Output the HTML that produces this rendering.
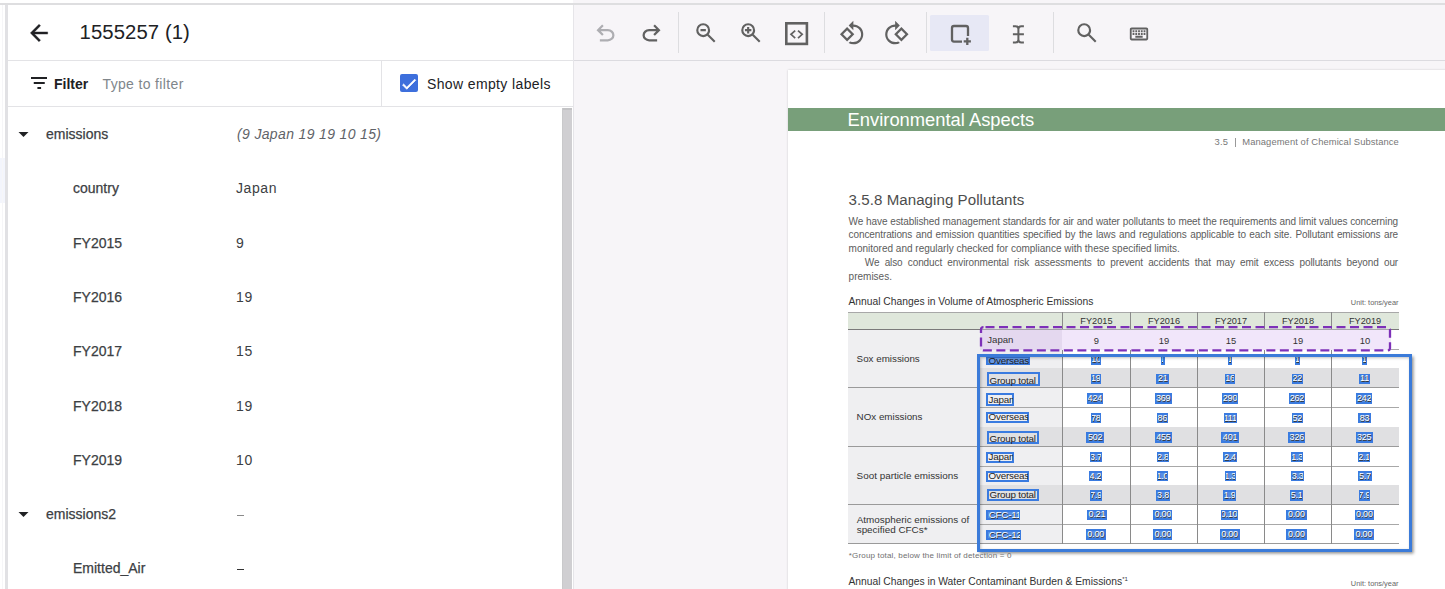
<!DOCTYPE html>
<html><head><meta charset="utf-8"><style>
html,body{margin:0;padding:0;width:1445px;height:589px;overflow:hidden;background:#fff;font-family:"Liberation Sans", sans-serif}
.r{position:absolute;display:block}
.t{position:absolute;white-space:nowrap;line-height:1;font-family:"Liberation Sans", sans-serif}
</style></head><body>
<div class="r" style="left:0.00px;top:0.00px;width:1445.00px;height:589.00px;background:#ffffff"></div>
<div class="r" style="left:573.00px;top:0.00px;width:872.00px;height:589.00px;background:#f7f5f8"></div>
<div class="r" style="left:0.00px;top:3.00px;width:1445.00px;height:2.00px;background:#dedee0"></div>
<div class="r" style="left:0.00px;top:158.00px;width:5.00px;height:45.00px;background:#f3f5fc"></div>
<div class="r" style="left:5.00px;top:5.00px;width:2.50px;height:584.00px;background:#e1e1e4"></div>
<div class="r" style="left:2.00px;top:5.00px;width:1.00px;height:584.00px;background:#f6f6f8"></div>
<div class="r" style="left:7.50px;top:60.00px;width:566.00px;height:1.00px;background:#e3e3e6"></div>
<div class="r" style="left:573.00px;top:60.00px;width:872.00px;height:1.20px;background:#dcdbe0"></div>
<div class="r" style="left:7.50px;top:106.00px;width:566.00px;height:1.00px;background:#e3e3e6"></div>
<div class="r" style="left:381.00px;top:61.00px;width:1.00px;height:45.00px;background:#e3e3e6"></div>
<div class="r" style="left:573.00px;top:5.00px;width:1.20px;height:584.00px;background:#e6e5e9"></div>
<div class="r" style="left:562.00px;top:108.00px;width:10.00px;height:481.00px;background:#d0cfd2"></div>
<div class="r" style="left:562.00px;top:108.00px;width:10.00px;height:1.60px;background:#c3c3c5"></div>
<div class="r" style="left:562.00px;top:108.00px;width:1.00px;height:481.00px;background:#c9c9cb"></div>
<svg class="r" style="left:26.3px;top:20px" width="26" height="26" viewBox="0 0 24 24"><path fill="#202124" stroke="#202124" stroke-width="0.35" d="M20 11H7.83l5.59-5.59L12 4l-8 8 8 8 1.41-1.41L7.83 13H20v-2z"/></svg>
<div class="t" style="left:79.50px;top:21.83px;font-size:20.3px;color:#202124;font-weight:400;font-style:normal;letter-spacing:0.1px">1555257 (1)</div>
<svg class="r" style="left:30.5px;top:72px" width="16.5" height="22" viewBox="3 1 18 22" preserveAspectRatio="none"><path fill="#202124" d="M10 18h4v-2h-4v2zM3 6v2h18V6H3zm3 7h12v-2H6v2z"/></svg>
<div class="t" style="left:54.00px;top:76.56px;font-size:14px;color:#202124;font-weight:700;font-style:normal;">Filter</div>
<div class="t" style="left:102.50px;top:76.56px;font-size:14px;color:#80868b;font-weight:400;font-style:normal;letter-spacing:0.35px">Type to filter</div>
<div class="r" style="left:400.00px;top:74.00px;width:18.00px;height:18.00px;background:#3d6fdc;border-radius:2px"></div>
<svg class="r" style="left:400px;top:74.6px" width="18" height="18" viewBox="0 0 24 24"><path fill="#fff" stroke="#fff" stroke-width="0.9" d="M9 16.17L4.83 12l-1.42 1.41L9 19 21 7l-1.41-1.41z"/></svg>
<div class="t" style="left:427.00px;top:76.56px;font-size:14px;color:#202124;font-weight:400;font-style:normal;letter-spacing:0.37px">Show empty labels</div>
<svg class="r" style="left:14px;top:122.0px" width="19" height="24" viewBox="2.5 0 19 24"><path fill="#202124" d="M7 10l5 5 5-5z"/></svg>
<div class="t" style="left:46.00px;top:126.96px;font-size:14px;color:#3c4043;font-weight:400;font-style:normal;-webkit-text-stroke:0.25px #3c4043">emissions</div>
<div class="t" style="left:237.00px;top:126.96px;font-size:14px;color:#5f6368;font-weight:400;font-style:italic;letter-spacing:0.35px">(9 Japan 19 19 10 15)</div>
<div class="t" style="left:73.00px;top:181.46px;font-size:14px;color:#3c4043;font-weight:400;font-style:normal;-webkit-text-stroke:0.25px #3c4043">country</div>
<div class="t" style="left:236.00px;top:181.46px;font-size:14px;color:#3c4043;font-weight:400;font-style:normal;letter-spacing:0.6px">Japan</div>
<div class="t" style="left:73.00px;top:235.76px;font-size:14px;color:#3c4043;font-weight:400;font-style:normal;-webkit-text-stroke:0.25px #3c4043">FY2015</div>
<div class="t" style="left:236.00px;top:235.76px;font-size:14px;color:#3c4043;font-weight:400;font-style:normal;letter-spacing:0.6px">9</div>
<div class="t" style="left:73.00px;top:289.96px;font-size:14px;color:#3c4043;font-weight:400;font-style:normal;-webkit-text-stroke:0.25px #3c4043">FY2016</div>
<div class="t" style="left:236.00px;top:289.96px;font-size:14px;color:#3c4043;font-weight:400;font-style:normal;letter-spacing:0.6px">19</div>
<div class="t" style="left:73.00px;top:344.26px;font-size:14px;color:#3c4043;font-weight:400;font-style:normal;-webkit-text-stroke:0.25px #3c4043">FY2017</div>
<div class="t" style="left:236.00px;top:344.26px;font-size:14px;color:#3c4043;font-weight:400;font-style:normal;letter-spacing:0.6px">15</div>
<div class="t" style="left:73.00px;top:398.56px;font-size:14px;color:#3c4043;font-weight:400;font-style:normal;-webkit-text-stroke:0.25px #3c4043">FY2018</div>
<div class="t" style="left:236.00px;top:398.56px;font-size:14px;color:#3c4043;font-weight:400;font-style:normal;letter-spacing:0.6px">19</div>
<div class="t" style="left:73.00px;top:452.86px;font-size:14px;color:#3c4043;font-weight:400;font-style:normal;-webkit-text-stroke:0.25px #3c4043">FY2019</div>
<div class="t" style="left:236.00px;top:452.86px;font-size:14px;color:#3c4043;font-weight:400;font-style:normal;letter-spacing:0.6px">10</div>
<svg class="r" style="left:14px;top:502.2px" width="19" height="24" viewBox="2.5 0 19 24"><path fill="#202124" d="M7 10l5 5 5-5z"/></svg>
<div class="t" style="left:46.00px;top:507.16px;font-size:14px;color:#3c4043;font-weight:400;font-style:normal;-webkit-text-stroke:0.25px #3c4043">emissions2</div>
<div class="r" style="left:236.60px;top:514.50px;width:7.30px;height:1.10px;background:#8a8a8a"></div>
<div class="t" style="left:73.00px;top:561.46px;font-size:14px;color:#3c4043;font-weight:400;font-style:normal;-webkit-text-stroke:0.25px #3c4043">Emitted_Air</div>
<div class="r" style="left:236.60px;top:569.40px;width:7.30px;height:1.10px;background:#333"></div>
<svg class="r" style="left:591.80px;top:19.90px" width="27" height="27" viewBox="0 -960 960 960"><path fill="#aeaeb2" d="M280-200v-80h284q63 0 109.5-40T720-420q0-60-46.5-100T564-560H312l104 104-56 56-200-200 200-200 56 56-104 104h252q97 0 166.5 63T800-420q0 94-69.5 157T564-200H280Z"/></svg>
<svg class="r" style="left:637.50px;top:19.80px" width="27" height="27" viewBox="0 -960 960 960"><path fill="#616161" d="M396-200q-97 0-166.5-63T160-420q0-94 69.5-157T396-640h252L544-744l56-56 200 200-200 200-56-56 104-104H396q-63 0-109.5 40T240-420q0 60 46.5 100T396-280h284v80H396Z"/></svg>
<div class="r" style="left:678.00px;top:12.00px;width:1.00px;height:41.00px;background:#dddde0"></div>
<svg class="r" style="left:693.15px;top:20.45px" width="25.7" height="25.7" viewBox="0 -960 960 960"><path fill="#616161" d="M784-120 532-372q-30 24-69 38t-83 14q-109 0-184.5-75.5T120-580q0-109 75.5-184.5T380-840q109 0 184.5 75.5T640-580q0 44-14 83t-38 69l252 252-56 56ZM380-400q75 0 127.5-52.5T560-580q0-75-52.5-127.5T380-760q-75 0-127.5 52.5T200-580q0 75 52.5 127.5T380-400ZM280-540v-80h200v80H280Z"/></svg>
<svg class="r" style="left:738.15px;top:20.45px" width="25.7" height="25.7" viewBox="0 -960 960 960"><path fill="#616161" d="M784-120 532-372q-30 24-69 38t-83 14q-109 0-184.5-75.5T120-580q0-109 75.5-184.5T380-840q109 0 184.5 75.5T640-580q0 44-14 83t-38 69l252 252-56 56ZM380-400q75 0 127.5-52.5T560-580q0-75-52.5-127.5T380-760q-75 0-127.5 52.5T200-580q0 75 52.5 127.5T380-400Zm-40-60v-80h-80v-80h80v-80h80v80h80v80h-80v80h-80Z"/></svg>
<svg class="r" style="left:784px;top:21px" width="25" height="25" viewBox="0 0 25 25"><rect x="2.3" y="2.3" width="20.6" height="20.6" fill="none" stroke="#616161" stroke-width="2.6"/><path d="M11.2 9.6l-4.2 3.75 4.2 3.75M14 9.6l4.2 3.75-4.2 3.75" fill="none" stroke="#616161" stroke-width="1.7"/></svg>
<div class="r" style="left:824.00px;top:12.00px;width:1.00px;height:41.00px;background:#dddde0"></div>
<svg class="r" style="left:838.55px;top:20.05px" width="26.5" height="26.5" viewBox="0 0 24 24"><path fill="#616161" d="M7.34 6.41L.86 12.9l6.49 6.48 6.49-6.48-6.5-6.49zM3.69 12.9l3.66-3.66L11 12.9l-3.66 3.66-3.65-3.66zm15.67-6.26C17.61 4.88 15.3 4 13 4V.76L8.76 5 13 9.24V6c1.79 0 3.58.68 4.95 2.05 2.73 2.73 2.73 7.17 0 9.9C16.58 19.32 14.79 20 13 20c-.97 0-1.94-.21-2.84-.61l-1.49 1.49C10.02 21.62 11.51 22 13 22c2.3 0 4.61-.88 6.36-2.64 3.52-3.51 3.52-9.21 0-12.72z"/></svg>
<svg class="r" style="left:883.45px;top:20.05px;transform:scaleX(-1)" width="26.5" height="26.5" viewBox="0 0 24 24"><path fill="#616161" d="M7.34 6.41L.86 12.9l6.49 6.48 6.49-6.48-6.5-6.49zM3.69 12.9l3.66-3.66L11 12.9l-3.66 3.66-3.65-3.66zm15.67-6.26C17.61 4.88 15.3 4 13 4V.76L8.76 5 13 9.24V6c1.79 0 3.58.68 4.95 2.05 2.73 2.73 2.73 7.17 0 9.9C16.58 19.32 14.79 20 13 20c-.97 0-1.94-.21-2.84-.61l-1.49 1.49C10.02 21.62 11.51 22 13 22c2.3 0 4.61-.88 6.36-2.64 3.52-3.51 3.52-9.21 0-12.72z"/></svg>
<div class="r" style="left:925.50px;top:12.00px;width:1.00px;height:41.00px;background:#dddde0"></div>
<div class="r" style="left:930.00px;top:14.50px;width:59.00px;height:36.00px;background:#e7e8f5;border-radius:1.5px"></div>
<svg class="r" style="left:948px;top:22px" width="26" height="26" viewBox="0 0 26 26"><path d="M14 19.6H6a2 2 0 0 1-2-2V6a2 2 0 0 1 2-2h12a2 2 0 0 1 2 2v8" fill="none" stroke="#616161" stroke-width="2.3"/><path d="M19.3 15.8v7.2M15.7 19.4h7.2" stroke="#616161" stroke-width="2.3"/></svg>
<svg class="r" style="left:1006px;top:21.5px" width="24" height="24" viewBox="0 0 24 24"><path d="M6.9 4.2h2.6q2.9 0 2.9 3v10.2q0 3-2.9 3H6.9M17.9 4.2h-2.6q-2.9 0-2.9 3M12.4 17.4q0 3 2.9 3h2.6M6.9 12.3h11" fill="none" stroke="#616161" stroke-width="2"/></svg>
<div class="r" style="left:1052.50px;top:12.00px;width:1.00px;height:41.00px;background:#dddde0"></div>
<svg class="r" style="left:1074.15px;top:20.35px" width="25.7" height="25.7" viewBox="0 -960 960 960"><path fill="#616161" d="M784-120 532-372q-30 24-69 38t-83 14q-109 0-184.5-75.5T120-580q0-109 75.5-184.5T380-840q109 0 184.5 75.5T640-580q0 44-14 83t-38 69l252 252-56 56ZM380-400q75 0 127.5-52.5T560-580q0-75-52.5-127.5T380-760q-75 0-127.5 52.5T200-580q0 75 52.5 127.5T380-400Z"/></svg>
<svg class="r" style="left:1128.30px;top:22.70px" width="22" height="22" viewBox="0 0 24 24"><path fill="#616161" d="M20 5H4c-1.1 0-1.99.9-1.99 2L2 17c0 1.1.9 2 2 2h16c1.1 0 2-.9 2-2V7c0-1.1-.9-2-2-2zm0 12H4V7h16v10zm-9-9h2v2h-2zm0 3h2v2h-2zM8 8h2v2H8zm0 3h2v2H8zm-3 0h2v2H5zm0-3h2v2H5zm3 6h8v2H8zm6-3h2v2h-2zm0-3h2v2h-2zm3 3h2v2h-2zm0-3h2v2h-2z"/></svg>
<div class="r" style="left:787.50px;top:69.50px;width:700.00px;height:560.00px;background:#ffffff;box-shadow:0 0 2px rgba(0,0,0,0.18)"></div>
<div class="r" style="left:787.50px;top:108.30px;width:700.00px;height:22.50px;background:#789f7a"></div>
<div class="t" style="left:847.60px;top:111.38px;font-size:18.35px;color:#ffffff;font-weight:400;font-style:normal;">Environmental Aspects</div>
<div class="t" style="left:1214.50px;top:137.15px;font-size:9.4px;color:#777;font-weight:400;font-style:normal;letter-spacing:0.2px">3.5</div>
<div class="r" style="left:1235.20px;top:137.50px;width:0.80px;height:9.00px;background:#999"></div>
<div class="t" style="left:1242.30px;top:137.15px;font-size:9.4px;color:#777;font-weight:400;font-style:normal;letter-spacing:0.09px">Management of Chemical Substance</div>
<div class="t" style="left:848.60px;top:192.13px;font-size:15.1px;color:#4d4d4d;font-weight:400;font-style:normal;letter-spacing:0.05px">3.5.8 Managing Pollutants</div>
<div class="t" style="left:848.6px;top:216.74px;width:549.5px;font-size:10.0px;color:#5c5c5c;text-align:justify;text-align-last:justify;white-space:normal;letter-spacing:-0.1px">We have established management standards for air and water pollutants to meet the requirements and limit values concerning</div>
<div class="t" style="left:848.6px;top:230.44px;width:549.5px;font-size:10.0px;color:#5c5c5c;text-align:justify;text-align-last:justify;white-space:normal;letter-spacing:-0.1px">concentrations and emission quantities specified by the laws and regulations applicable to each site. Pollutant emissions are</div>
<div class="t" style="left:848.60px;top:244.14px;font-size:10.0px;color:#5c5c5c;font-weight:400;font-style:normal;">monitored and regularly checked for compliance with these specified limits.</div>
<div class="t" style="left:864.8000000000001px;top:257.94px;width:533.3px;font-size:10.0px;color:#5c5c5c;text-align:justify;text-align-last:justify;white-space:normal;letter-spacing:-0.1px">We also conduct environmental risk assessments to prevent accidents that may emit excess pollutants beyond our</div>
<div class="t" style="left:848.60px;top:271.54px;font-size:10.0px;color:#5c5c5c;font-weight:400;font-style:normal;">premises.</div>
<div class="t" style="left:848.40px;top:296.89px;font-size:10.3px;color:#333;font-weight:400;font-style:normal;">Annual Changes in Volume of Atmospheric Emissions</div>
<div class="t" style="left:1300px;top:299px;width:98.5px;text-align:right;font-size:7.4px;line-height:8px;color:#666">Unit: tons/year</div>
<div class="r" style="left:848.40px;top:312.00px;width:550.20px;height:17.40px;background:#dfe7db"></div>
<div class="r" style="left:848.40px;top:312.00px;width:550.20px;height:1.00px;background:#a8a8a8"></div>
<div class="t" style="left:1062.40px;top:316.92px;width:68.10px;text-align:center;font-size:9.2px;color:#333">FY2015</div>
<div class="t" style="left:1130.50px;top:316.92px;width:67.00px;text-align:center;font-size:9.2px;color:#333">FY2016</div>
<div class="t" style="left:1197.50px;top:316.92px;width:67.00px;text-align:center;font-size:9.2px;color:#333">FY2017</div>
<div class="t" style="left:1264.50px;top:316.92px;width:67.00px;text-align:center;font-size:9.2px;color:#333">FY2018</div>
<div class="t" style="left:1331.50px;top:316.92px;width:67.10px;text-align:center;font-size:9.2px;color:#333">FY2019</div>
<div class="r" style="left:848.40px;top:329.40px;width:214.00px;height:214.10px;background:#efeff1"></div>
<div class="r" style="left:980.00px;top:348.50px;width:418.60px;height:1.00px;background:#a8a8a8"></div>
<div class="r" style="left:980.00px;top:368.30px;width:418.60px;height:19.20px;background:#e0e0e2"></div>
<div class="r" style="left:980.00px;top:387.00px;width:418.60px;height:1.00px;background:#a8a8a8"></div>
<div class="r" style="left:980.00px;top:406.70px;width:418.60px;height:1.00px;background:#a8a8a8"></div>
<div class="r" style="left:980.00px;top:426.70px;width:418.60px;height:19.90px;background:#e0e0e2"></div>
<div class="r" style="left:980.00px;top:446.10px;width:418.60px;height:1.00px;background:#a8a8a8"></div>
<div class="r" style="left:980.00px;top:465.50px;width:418.60px;height:1.00px;background:#a8a8a8"></div>
<div class="r" style="left:980.00px;top:485.30px;width:418.60px;height:19.30px;background:#e0e0e2"></div>
<div class="r" style="left:980.00px;top:504.10px;width:418.60px;height:1.00px;background:#a8a8a8"></div>
<div class="r" style="left:980.00px;top:523.70px;width:418.60px;height:1.00px;background:#a8a8a8"></div>
<div class="r" style="left:848.40px;top:328.80px;width:550.20px;height:1.10px;background:#7a7a7a"></div>
<div class="r" style="left:848.40px;top:387.00px;width:550.20px;height:1.00px;background:#9a9a9a"></div>
<div class="r" style="left:848.40px;top:446.10px;width:550.20px;height:1.00px;background:#9a9a9a"></div>
<div class="r" style="left:848.40px;top:504.10px;width:550.20px;height:1.00px;background:#9a9a9a"></div>
<div class="r" style="left:848.40px;top:543.00px;width:550.20px;height:1.00px;background:#9a9a9a"></div>
<div class="r" style="left:1061.90px;top:312.00px;width:1.00px;height:231.50px;background:#8a8a8a"></div>
<div class="r" style="left:1130.00px;top:312.00px;width:1.00px;height:231.50px;background:#8a8a8a"></div>
<div class="r" style="left:1197.00px;top:312.00px;width:1.00px;height:231.50px;background:#8a8a8a"></div>
<div class="r" style="left:1264.00px;top:312.00px;width:1.00px;height:231.50px;background:#8a8a8a"></div>
<div class="r" style="left:1331.00px;top:312.00px;width:1.00px;height:231.50px;background:#8a8a8a"></div>
<div class="t" style="left:856.60px;top:354.41px;font-size:9.8px;color:#333;font-weight:400;font-style:normal;">Sox emissions</div>
<div class="t" style="left:856.60px;top:412.41px;font-size:9.8px;color:#333;font-weight:400;font-style:normal;">NOx emissions</div>
<div class="t" style="left:856.60px;top:471.42px;font-size:9.9px;color:#333;font-weight:400;font-style:normal;">Soot particle emissions</div>
<div class="t" style="left:856.70px;top:514.62px;font-size:9.9px;color:#333;font-weight:400;font-style:normal;">Atmospheric emissions of</div>
<div class="t" style="left:856.70px;top:524.52px;font-size:9.9px;color:#333;font-weight:400;font-style:normal;">specified CFCs*</div>
<div class="r" style="left:979.80px;top:329.40px;width:411.00px;height:21.00px;background:#f1e6fa"></div>
<div class="r" style="left:979.80px;top:329.40px;width:82.60px;height:21.00px;background:#e4d8ef"></div>
<div class="t" style="left:987.30px;top:335.38px;font-size:9.6px;color:#333;font-weight:400;font-style:normal;">Japan</div>
<div class="t" style="left:1062.40px;top:335.55px;width:68.10px;text-align:center;font-size:9.4px;color:#333">9</div>
<div class="t" style="left:1130.50px;top:335.55px;width:67.00px;text-align:center;font-size:9.4px;color:#333">19</div>
<div class="t" style="left:1197.50px;top:335.55px;width:67.00px;text-align:center;font-size:9.4px;color:#333">15</div>
<div class="t" style="left:1264.50px;top:335.55px;width:67.00px;text-align:center;font-size:9.4px;color:#333">19</div>
<div class="t" style="left:1331.50px;top:335.55px;width:67.10px;text-align:center;font-size:9.4px;color:#333">10</div>
<div class="r" style="left:979.80px;top:328.90px;width:411.00px;height:1.00px;background:rgba(120,120,120,0.6)"></div>
<svg class="r" style="left:977px;top:324px" width="418" height="30" viewBox="977 324 418 30"><rect x="981" y="327.2" width="409" height="23.2" rx="2.5" ry="2.5" fill="none" stroke="#7d30b8" stroke-width="2.3" stroke-dasharray="9 4.5" stroke-dashoffset="-2"/></svg>
<div class="r" style="left:986.10px;top:356.10px;width:43.70px;height:9.00px;background:rgba(58,123,224,0.75);border:2px solid #3a7be0;box-sizing:border-box"></div>
<div class="r" style="left:987.10px;top:352.10px;width:41.70px;height:17.00px;overflow:hidden;font-size:9.8px;color:#1e1e1e;white-space:nowrap;letter-spacing:-0.2px;"><span style="position:absolute;left:1.5px;top:3.91px;line-height:1">Overseas</span></div>
<div class="r" style="left:987.00px;top:372.30px;width:52.80px;height:14.10px;background:transparent;border:2px solid #3a7be0;box-sizing:border-box"></div>
<div class="r" style="left:988.00px;top:368.30px;width:50.80px;height:22.10px;overflow:hidden;font-size:9.8px;color:#1e1e1e;white-space:nowrap;letter-spacing:-0.2px;"><span style="position:absolute;left:1.5px;top:7.51px;line-height:1">Group total</span></div>
<div class="r" style="left:986.10px;top:393.40px;width:27.90px;height:12.20px;background:transparent;border:2px solid #3a7be0;box-sizing:border-box"></div>
<div class="r" style="left:987.10px;top:389.40px;width:25.90px;height:20.20px;overflow:hidden;font-size:9.8px;color:#1e1e1e;white-space:nowrap;letter-spacing:-0.2px;"><span style="position:absolute;left:1.5px;top:5.61px;line-height:1">Japan</span></div>
<div class="r" style="left:986.10px;top:411.80px;width:43.30px;height:11.20px;background:transparent;border:2px solid #3a7be0;box-sizing:border-box"></div>
<div class="r" style="left:987.10px;top:407.80px;width:41.30px;height:19.20px;overflow:hidden;font-size:9.8px;color:#1e1e1e;white-space:nowrap;letter-spacing:-0.2px;"><span style="position:absolute;left:1.5px;top:4.61px;line-height:1">Overseas</span></div>
<div class="r" style="left:987.00px;top:430.80px;width:51.80px;height:13.40px;background:transparent;border:2px solid #3a7be0;box-sizing:border-box"></div>
<div class="r" style="left:988.00px;top:426.80px;width:49.80px;height:21.40px;overflow:hidden;font-size:9.8px;color:#1e1e1e;white-space:nowrap;letter-spacing:-0.2px;"><span style="position:absolute;left:1.5px;top:6.81px;line-height:1">Group total</span></div>
<div class="r" style="left:986.10px;top:451.60px;width:27.90px;height:11.00px;background:transparent;border:2px solid #3a7be0;box-sizing:border-box"></div>
<div class="r" style="left:987.10px;top:447.60px;width:25.90px;height:19.00px;overflow:hidden;font-size:9.8px;color:#1e1e1e;white-space:nowrap;letter-spacing:-0.2px;"><span style="position:absolute;left:1.5px;top:4.41px;line-height:1">Japan</span></div>
<div class="r" style="left:986.10px;top:470.60px;width:43.30px;height:11.00px;background:transparent;border:2px solid #3a7be0;box-sizing:border-box"></div>
<div class="r" style="left:987.10px;top:466.60px;width:41.30px;height:19.00px;overflow:hidden;font-size:9.8px;color:#1e1e1e;white-space:nowrap;letter-spacing:-0.2px;"><span style="position:absolute;left:1.5px;top:4.41px;line-height:1">Overseas</span></div>
<div class="r" style="left:987.00px;top:489.40px;width:51.80px;height:11.60px;background:transparent;border:2px solid #3a7be0;box-sizing:border-box"></div>
<div class="r" style="left:988.00px;top:485.40px;width:49.80px;height:19.60px;overflow:hidden;font-size:9.8px;color:#1e1e1e;white-space:nowrap;letter-spacing:-0.2px;"><span style="position:absolute;left:1.5px;top:5.01px;line-height:1">Group total</span></div>
<div class="r" style="left:986.20px;top:510.30px;width:33.70px;height:10.20px;background:rgba(58,123,224,0.85);border:2px solid #3a7be0;box-sizing:border-box"></div>
<div class="r" style="left:987.20px;top:506.30px;width:31.70px;height:18.20px;overflow:hidden;font-size:9.8px;color:#ffffff;white-space:nowrap;letter-spacing:-0.2px;text-shadow:0.7px 0.5px 0 #333"><span style="position:absolute;left:1.5px;top:3.91px;line-height:1">CFC-11</span></div>
<div class="r" style="left:986.20px;top:529.60px;width:34.70px;height:10.20px;background:rgba(58,123,224,0.85);border:2px solid #3a7be0;box-sizing:border-box"></div>
<div class="r" style="left:987.20px;top:525.60px;width:32.70px;height:18.20px;overflow:hidden;font-size:9.8px;color:#ffffff;white-space:nowrap;letter-spacing:-0.2px;text-shadow:0.7px 0.5px 0 #333"><span style="position:absolute;left:1.5px;top:3.91px;line-height:1">CFC-12</span></div>
<div class="r" style="left:1091.40px;top:356.50px;width:9.30px;height:8.00px;background:rgba(58,123,224,0.85);border:2px solid #3a7be0;box-sizing:border-box"></div>
<div class="r" style="left:1092.40px;top:352.50px;width:7.30px;height:16.00px;overflow:hidden;font-size:9px;color:#ffffff;white-space:nowrap;letter-spacing:-0.2px;text-shadow:0.7px 0.5px 0 #333"><span style="position:absolute;left:-10px;right:-10px;top:2.59px;text-align:center;line-height:1">10</span></div>
<div class="r" style="left:1161.00px;top:356.50px;width:3.40px;height:8.00px;background:rgba(58,123,224,0.85);border:2px solid #3a7be0;box-sizing:border-box"></div>
<div class="r" style="left:1162.00px;top:352.50px;width:1.40px;height:16.00px;overflow:hidden;font-size:9px;color:#ffffff;white-space:nowrap;letter-spacing:-0.2px;text-shadow:0.7px 0.5px 0 #333"><span style="position:absolute;left:-10px;right:-10px;top:2.59px;text-align:center;line-height:1">1</span></div>
<div class="r" style="left:1228.00px;top:356.50px;width:3.80px;height:8.00px;background:rgba(58,123,224,0.85);border:2px solid #3a7be0;box-sizing:border-box"></div>
<div class="r" style="left:1229.00px;top:352.50px;width:1.80px;height:16.00px;overflow:hidden;font-size:9px;color:#ffffff;white-space:nowrap;letter-spacing:-0.2px;text-shadow:0.7px 0.5px 0 #333"><span style="position:absolute;left:-10px;right:-10px;top:2.59px;text-align:center;line-height:1">1</span></div>
<div class="r" style="left:1295.00px;top:356.50px;width:4.70px;height:8.00px;background:rgba(58,123,224,0.85);border:2px solid #3a7be0;box-sizing:border-box"></div>
<div class="r" style="left:1296.00px;top:352.50px;width:2.70px;height:16.00px;overflow:hidden;font-size:9px;color:#ffffff;white-space:nowrap;letter-spacing:-0.2px;text-shadow:0.7px 0.5px 0 #333"><span style="position:absolute;left:-10px;right:-10px;top:2.59px;text-align:center;line-height:1">1</span></div>
<div class="r" style="left:1362.10px;top:356.50px;width:4.80px;height:8.00px;background:rgba(58,123,224,0.85);border:2px solid #3a7be0;box-sizing:border-box"></div>
<div class="r" style="left:1363.10px;top:352.50px;width:2.80px;height:16.00px;overflow:hidden;font-size:9px;color:#ffffff;white-space:nowrap;letter-spacing:-0.2px;text-shadow:0.7px 0.5px 0 #333"><span style="position:absolute;left:-10px;right:-10px;top:2.59px;text-align:center;line-height:1">1</span></div>
<div class="r" style="left:1091.00px;top:374.20px;width:9.70px;height:9.50px;background:rgba(58,123,224,0.85);border:2px solid #3a7be0;box-sizing:border-box"></div>
<div class="r" style="left:1092.00px;top:370.20px;width:7.70px;height:17.50px;overflow:hidden;font-size:9px;color:#ffffff;white-space:nowrap;letter-spacing:-0.2px;text-shadow:0.7px 0.5px 0 #333"><span style="position:absolute;left:-10px;right:-10px;top:4.09px;text-align:center;line-height:1">19</span></div>
<div class="r" style="left:1156.40px;top:374.20px;width:12.60px;height:9.50px;background:rgba(58,123,224,0.85);border:2px solid #3a7be0;box-sizing:border-box"></div>
<div class="r" style="left:1157.40px;top:370.20px;width:10.60px;height:17.50px;overflow:hidden;font-size:9px;color:#ffffff;white-space:nowrap;letter-spacing:-0.2px;text-shadow:0.7px 0.5px 0 #333"><span style="position:absolute;left:-10px;right:-10px;top:4.09px;text-align:center;line-height:1">21</span></div>
<div class="r" style="left:1225.00px;top:374.20px;width:9.90px;height:9.50px;background:rgba(58,123,224,0.85);border:2px solid #3a7be0;box-sizing:border-box"></div>
<div class="r" style="left:1226.00px;top:370.20px;width:7.90px;height:17.50px;overflow:hidden;font-size:9px;color:#ffffff;white-space:nowrap;letter-spacing:-0.2px;text-shadow:0.7px 0.5px 0 #333"><span style="position:absolute;left:-10px;right:-10px;top:4.09px;text-align:center;line-height:1">16</span></div>
<div class="r" style="left:1291.70px;top:374.20px;width:11.00px;height:9.50px;background:rgba(58,123,224,0.85);border:2px solid #3a7be0;box-sizing:border-box"></div>
<div class="r" style="left:1292.70px;top:370.20px;width:9.00px;height:17.50px;overflow:hidden;font-size:9px;color:#ffffff;white-space:nowrap;letter-spacing:-0.2px;text-shadow:0.7px 0.5px 0 #333"><span style="position:absolute;left:-10px;right:-10px;top:4.09px;text-align:center;line-height:1">22</span></div>
<div class="r" style="left:1359.00px;top:374.20px;width:11.00px;height:9.50px;background:rgba(58,123,224,0.85);border:2px solid #3a7be0;box-sizing:border-box"></div>
<div class="r" style="left:1360.00px;top:370.20px;width:9.00px;height:17.50px;overflow:hidden;font-size:9px;color:#ffffff;white-space:nowrap;letter-spacing:-0.2px;text-shadow:0.7px 0.5px 0 #333"><span style="position:absolute;left:-10px;right:-10px;top:4.09px;text-align:center;line-height:1">11</span></div>
<div class="r" style="left:1086.80px;top:393.40px;width:16.00px;height:10.20px;background:rgba(58,123,224,0.85);border:2px solid #3a7be0;box-sizing:border-box"></div>
<div class="r" style="left:1087.80px;top:389.40px;width:14.00px;height:18.20px;overflow:hidden;font-size:9px;color:#ffffff;white-space:nowrap;letter-spacing:-0.2px;text-shadow:0.7px 0.5px 0 #333"><span style="position:absolute;left:-10px;right:-10px;top:4.79px;text-align:center;line-height:1">424</span></div>
<div class="r" style="left:1154.70px;top:393.40px;width:17.00px;height:10.20px;background:rgba(58,123,224,0.85);border:2px solid #3a7be0;box-sizing:border-box"></div>
<div class="r" style="left:1155.70px;top:389.40px;width:15.00px;height:18.20px;overflow:hidden;font-size:9px;color:#ffffff;white-space:nowrap;letter-spacing:-0.2px;text-shadow:0.7px 0.5px 0 #333"><span style="position:absolute;left:-10px;right:-10px;top:4.79px;text-align:center;line-height:1">369</span></div>
<div class="r" style="left:1222.00px;top:393.40px;width:16.00px;height:10.20px;background:rgba(58,123,224,0.85);border:2px solid #3a7be0;box-sizing:border-box"></div>
<div class="r" style="left:1223.00px;top:389.40px;width:14.00px;height:18.20px;overflow:hidden;font-size:9px;color:#ffffff;white-space:nowrap;letter-spacing:-0.2px;text-shadow:0.7px 0.5px 0 #333"><span style="position:absolute;left:-10px;right:-10px;top:4.79px;text-align:center;line-height:1">290</span></div>
<div class="r" style="left:1289.00px;top:393.40px;width:15.80px;height:10.20px;background:rgba(58,123,224,0.85);border:2px solid #3a7be0;box-sizing:border-box"></div>
<div class="r" style="left:1290.00px;top:389.40px;width:13.80px;height:18.20px;overflow:hidden;font-size:9px;color:#ffffff;white-space:nowrap;letter-spacing:-0.2px;text-shadow:0.7px 0.5px 0 #333"><span style="position:absolute;left:-10px;right:-10px;top:4.79px;text-align:center;line-height:1">262</span></div>
<div class="r" style="left:1356.20px;top:393.40px;width:16.10px;height:10.20px;background:rgba(58,123,224,0.85);border:2px solid #3a7be0;box-sizing:border-box"></div>
<div class="r" style="left:1357.20px;top:389.40px;width:14.10px;height:18.20px;overflow:hidden;font-size:9px;color:#ffffff;white-space:nowrap;letter-spacing:-0.2px;text-shadow:0.7px 0.5px 0 #333"><span style="position:absolute;left:-10px;right:-10px;top:4.79px;text-align:center;line-height:1">242</span></div>
<div class="r" style="left:1091.00px;top:412.60px;width:9.70px;height:10.50px;background:rgba(58,123,224,0.85);border:2px solid #3a7be0;box-sizing:border-box"></div>
<div class="r" style="left:1092.00px;top:408.60px;width:7.70px;height:18.50px;overflow:hidden;font-size:9px;color:#ffffff;white-space:nowrap;letter-spacing:-0.2px;text-shadow:0.7px 0.5px 0 #333"><span style="position:absolute;left:-10px;right:-10px;top:5.09px;text-align:center;line-height:1">78</span></div>
<div class="r" style="left:1157.00px;top:412.60px;width:10.80px;height:10.50px;background:rgba(58,123,224,0.85);border:2px solid #3a7be0;box-sizing:border-box"></div>
<div class="r" style="left:1158.00px;top:408.60px;width:8.80px;height:18.50px;overflow:hidden;font-size:9px;color:#ffffff;white-space:nowrap;letter-spacing:-0.2px;text-shadow:0.7px 0.5px 0 #333"><span style="position:absolute;left:-10px;right:-10px;top:5.09px;text-align:center;line-height:1">86</span></div>
<div class="r" style="left:1223.80px;top:412.60px;width:12.80px;height:10.50px;background:rgba(58,123,224,0.85);border:2px solid #3a7be0;box-sizing:border-box"></div>
<div class="r" style="left:1224.80px;top:408.60px;width:10.80px;height:18.50px;overflow:hidden;font-size:9px;color:#ffffff;white-space:nowrap;letter-spacing:-0.2px;text-shadow:0.7px 0.5px 0 #333"><span style="position:absolute;left:-10px;right:-10px;top:5.09px;text-align:center;line-height:1">111</span></div>
<div class="r" style="left:1291.70px;top:412.60px;width:11.00px;height:10.50px;background:rgba(58,123,224,0.85);border:2px solid #3a7be0;box-sizing:border-box"></div>
<div class="r" style="left:1292.70px;top:408.60px;width:9.00px;height:18.50px;overflow:hidden;font-size:9px;color:#ffffff;white-space:nowrap;letter-spacing:-0.2px;text-shadow:0.7px 0.5px 0 #333"><span style="position:absolute;left:-10px;right:-10px;top:5.09px;text-align:center;line-height:1">52</span></div>
<div class="r" style="left:1357.90px;top:412.60px;width:13.10px;height:10.50px;background:rgba(58,123,224,0.85);border:2px solid #3a7be0;box-sizing:border-box"></div>
<div class="r" style="left:1358.90px;top:408.60px;width:11.10px;height:18.50px;overflow:hidden;font-size:9px;color:#ffffff;white-space:nowrap;letter-spacing:-0.2px;text-shadow:0.7px 0.5px 0 #333"><span style="position:absolute;left:-10px;right:-10px;top:5.09px;text-align:center;line-height:1">83</span></div>
<div class="r" style="left:1085.80px;top:431.60px;width:18.70px;height:11.00px;background:rgba(58,123,224,0.85);border:2px solid #3a7be0;box-sizing:border-box"></div>
<div class="r" style="left:1086.80px;top:427.60px;width:16.70px;height:19.00px;overflow:hidden;font-size:9px;color:#ffffff;white-space:nowrap;letter-spacing:-0.2px;text-shadow:0.7px 0.5px 0 #333"><span style="position:absolute;left:-10px;right:-10px;top:5.59px;text-align:center;line-height:1">502</span></div>
<div class="r" style="left:1154.70px;top:431.60px;width:17.30px;height:11.00px;background:rgba(58,123,224,0.85);border:2px solid #3a7be0;box-sizing:border-box"></div>
<div class="r" style="left:1155.70px;top:427.60px;width:15.30px;height:19.00px;overflow:hidden;font-size:9px;color:#ffffff;white-space:nowrap;letter-spacing:-0.2px;text-shadow:0.7px 0.5px 0 #333"><span style="position:absolute;left:-10px;right:-10px;top:5.59px;text-align:center;line-height:1">455</span></div>
<div class="r" style="left:1221.00px;top:431.60px;width:18.10px;height:11.00px;background:rgba(58,123,224,0.85);border:2px solid #3a7be0;box-sizing:border-box"></div>
<div class="r" style="left:1222.00px;top:427.60px;width:16.10px;height:19.00px;overflow:hidden;font-size:9px;color:#ffffff;white-space:nowrap;letter-spacing:-0.2px;text-shadow:0.7px 0.5px 0 #333"><span style="position:absolute;left:-10px;right:-10px;top:5.59px;text-align:center;line-height:1">401</span></div>
<div class="r" style="left:1288.30px;top:431.60px;width:17.00px;height:11.00px;background:rgba(58,123,224,0.85);border:2px solid #3a7be0;box-sizing:border-box"></div>
<div class="r" style="left:1289.30px;top:427.60px;width:15.00px;height:19.00px;overflow:hidden;font-size:9px;color:#ffffff;white-space:nowrap;letter-spacing:-0.2px;text-shadow:0.7px 0.5px 0 #333"><span style="position:absolute;left:-10px;right:-10px;top:5.59px;text-align:center;line-height:1">326</span></div>
<div class="r" style="left:1355.70px;top:431.60px;width:17.00px;height:11.00px;background:rgba(58,123,224,0.85);border:2px solid #3a7be0;box-sizing:border-box"></div>
<div class="r" style="left:1356.70px;top:427.60px;width:15.00px;height:19.00px;overflow:hidden;font-size:9px;color:#ffffff;white-space:nowrap;letter-spacing:-0.2px;text-shadow:0.7px 0.5px 0 #333"><span style="position:absolute;left:-10px;right:-10px;top:5.59px;text-align:center;line-height:1">325</span></div>
<div class="r" style="left:1090.10px;top:451.80px;width:11.70px;height:10.20px;background:rgba(58,123,224,0.85);border:2px solid #3a7be0;box-sizing:border-box"></div>
<div class="r" style="left:1091.10px;top:447.80px;width:9.70px;height:18.20px;overflow:hidden;font-size:9px;color:#ffffff;white-space:nowrap;letter-spacing:-0.2px;text-shadow:0.7px 0.5px 0 #333"><span style="position:absolute;left:-10px;right:-10px;top:4.79px;text-align:center;line-height:1">3.7</span></div>
<div class="r" style="left:1156.70px;top:451.80px;width:12.30px;height:10.20px;background:rgba(58,123,224,0.85);border:2px solid #3a7be0;box-sizing:border-box"></div>
<div class="r" style="left:1157.70px;top:447.80px;width:10.30px;height:18.20px;overflow:hidden;font-size:9px;color:#ffffff;white-space:nowrap;letter-spacing:-0.2px;text-shadow:0.7px 0.5px 0 #333"><span style="position:absolute;left:-10px;right:-10px;top:4.79px;text-align:center;line-height:1">2.8</span></div>
<div class="r" style="left:1223.00px;top:451.80px;width:13.80px;height:10.20px;background:rgba(58,123,224,0.85);border:2px solid #3a7be0;box-sizing:border-box"></div>
<div class="r" style="left:1224.00px;top:447.80px;width:11.80px;height:18.20px;overflow:hidden;font-size:9px;color:#ffffff;white-space:nowrap;letter-spacing:-0.2px;text-shadow:0.7px 0.5px 0 #333"><span style="position:absolute;left:-10px;right:-10px;top:4.79px;text-align:center;line-height:1">2.4</span></div>
<div class="r" style="left:1291.40px;top:451.80px;width:11.60px;height:10.20px;background:rgba(58,123,224,0.85);border:2px solid #3a7be0;box-sizing:border-box"></div>
<div class="r" style="left:1292.40px;top:447.80px;width:9.60px;height:18.20px;overflow:hidden;font-size:9px;color:#ffffff;white-space:nowrap;letter-spacing:-0.2px;text-shadow:0.7px 0.5px 0 #333"><span style="position:absolute;left:-10px;right:-10px;top:4.79px;text-align:center;line-height:1">1.3</span></div>
<div class="r" style="left:1358.00px;top:451.80px;width:12.30px;height:10.20px;background:rgba(58,123,224,0.85);border:2px solid #3a7be0;box-sizing:border-box"></div>
<div class="r" style="left:1359.00px;top:447.80px;width:10.30px;height:18.20px;overflow:hidden;font-size:9px;color:#ffffff;white-space:nowrap;letter-spacing:-0.2px;text-shadow:0.7px 0.5px 0 #333"><span style="position:absolute;left:-10px;right:-10px;top:4.79px;text-align:center;line-height:1">2.1</span></div>
<div class="r" style="left:1088.50px;top:471.00px;width:13.90px;height:10.10px;background:rgba(58,123,224,0.85);border:2px solid #3a7be0;box-sizing:border-box"></div>
<div class="r" style="left:1089.50px;top:467.00px;width:11.90px;height:18.10px;overflow:hidden;font-size:9px;color:#ffffff;white-space:nowrap;letter-spacing:-0.2px;text-shadow:0.7px 0.5px 0 #333"><span style="position:absolute;left:-10px;right:-10px;top:4.69px;text-align:center;line-height:1">4.2</span></div>
<div class="r" style="left:1156.70px;top:471.00px;width:11.30px;height:10.10px;background:rgba(58,123,224,0.85);border:2px solid #3a7be0;box-sizing:border-box"></div>
<div class="r" style="left:1157.70px;top:467.00px;width:9.30px;height:18.10px;overflow:hidden;font-size:9px;color:#ffffff;white-space:nowrap;letter-spacing:-0.2px;text-shadow:0.7px 0.5px 0 #333"><span style="position:absolute;left:-10px;right:-10px;top:4.69px;text-align:center;line-height:1">1.0</span></div>
<div class="r" style="left:1224.60px;top:471.00px;width:11.00px;height:10.10px;background:rgba(58,123,224,0.85);border:2px solid #3a7be0;box-sizing:border-box"></div>
<div class="r" style="left:1225.60px;top:467.00px;width:9.00px;height:18.10px;overflow:hidden;font-size:9px;color:#ffffff;white-space:nowrap;letter-spacing:-0.2px;text-shadow:0.7px 0.5px 0 #333"><span style="position:absolute;left:-10px;right:-10px;top:4.69px;text-align:center;line-height:1">1.3</span></div>
<div class="r" style="left:1290.80px;top:471.00px;width:13.70px;height:10.10px;background:rgba(58,123,224,0.85);border:2px solid #3a7be0;box-sizing:border-box"></div>
<div class="r" style="left:1291.80px;top:467.00px;width:11.70px;height:18.10px;overflow:hidden;font-size:9px;color:#ffffff;white-space:nowrap;letter-spacing:-0.2px;text-shadow:0.7px 0.5px 0 #333"><span style="position:absolute;left:-10px;right:-10px;top:4.69px;text-align:center;line-height:1">3.3</span></div>
<div class="r" style="left:1358.00px;top:471.00px;width:13.70px;height:10.10px;background:rgba(58,123,224,0.85);border:2px solid #3a7be0;box-sizing:border-box"></div>
<div class="r" style="left:1359.00px;top:467.00px;width:11.70px;height:18.10px;overflow:hidden;font-size:9px;color:#ffffff;white-space:nowrap;letter-spacing:-0.2px;text-shadow:0.7px 0.5px 0 #333"><span style="position:absolute;left:-10px;right:-10px;top:4.69px;text-align:center;line-height:1">5.7</span></div>
<div class="r" style="left:1090.10px;top:489.90px;width:11.70px;height:10.80px;background:rgba(58,123,224,0.85);border:2px solid #3a7be0;box-sizing:border-box"></div>
<div class="r" style="left:1091.10px;top:485.90px;width:9.70px;height:18.80px;overflow:hidden;font-size:9px;color:#ffffff;white-space:nowrap;letter-spacing:-0.2px;text-shadow:0.7px 0.5px 0 #333"><span style="position:absolute;left:-10px;right:-10px;top:5.39px;text-align:center;line-height:1">7.9</span></div>
<div class="r" style="left:1156.10px;top:489.90px;width:13.90px;height:10.80px;background:rgba(58,123,224,0.85);border:2px solid #3a7be0;box-sizing:border-box"></div>
<div class="r" style="left:1157.10px;top:485.90px;width:11.90px;height:18.80px;overflow:hidden;font-size:9px;color:#ffffff;white-space:nowrap;letter-spacing:-0.2px;text-shadow:0.7px 0.5px 0 #333"><span style="position:absolute;left:-10px;right:-10px;top:5.39px;text-align:center;line-height:1">3.8</span></div>
<div class="r" style="left:1223.00px;top:489.90px;width:13.20px;height:10.80px;background:rgba(58,123,224,0.85);border:2px solid #3a7be0;box-sizing:border-box"></div>
<div class="r" style="left:1224.00px;top:485.90px;width:11.20px;height:18.80px;overflow:hidden;font-size:9px;color:#ffffff;white-space:nowrap;letter-spacing:-0.2px;text-shadow:0.7px 0.5px 0 #333"><span style="position:absolute;left:-10px;right:-10px;top:5.39px;text-align:center;line-height:1">1.9</span></div>
<div class="r" style="left:1290.20px;top:489.90px;width:12.80px;height:10.80px;background:rgba(58,123,224,0.85);border:2px solid #3a7be0;box-sizing:border-box"></div>
<div class="r" style="left:1291.20px;top:485.90px;width:10.80px;height:18.80px;overflow:hidden;font-size:9px;color:#ffffff;white-space:nowrap;letter-spacing:-0.2px;text-shadow:0.7px 0.5px 0 #333"><span style="position:absolute;left:-10px;right:-10px;top:5.39px;text-align:center;line-height:1">5.1</span></div>
<div class="r" style="left:1359.00px;top:489.90px;width:10.60px;height:10.80px;background:rgba(58,123,224,0.85);border:2px solid #3a7be0;box-sizing:border-box"></div>
<div class="r" style="left:1360.00px;top:485.90px;width:8.60px;height:18.80px;overflow:hidden;font-size:9px;color:#ffffff;white-space:nowrap;letter-spacing:-0.2px;text-shadow:0.7px 0.5px 0 #333"><span style="position:absolute;left:-10px;right:-10px;top:5.39px;text-align:center;line-height:1">7.9</span></div>
<div class="r" style="left:1086.90px;top:510.30px;width:19.90px;height:9.50px;background:rgba(58,123,224,0.85);border:2px solid #3a7be0;box-sizing:border-box"></div>
<div class="r" style="left:1087.90px;top:506.30px;width:17.90px;height:17.50px;overflow:hidden;font-size:9px;color:#ffffff;white-space:nowrap;letter-spacing:-0.2px;text-shadow:0.7px 0.5px 0 #333"><span style="position:absolute;left:-10px;right:-10px;top:4.09px;text-align:center;line-height:1">0.21</span></div>
<div class="r" style="left:1153.30px;top:510.30px;width:19.10px;height:9.50px;background:rgba(58,123,224,0.85);border:2px solid #3a7be0;box-sizing:border-box"></div>
<div class="r" style="left:1154.30px;top:506.30px;width:17.10px;height:17.50px;overflow:hidden;font-size:9px;color:#ffffff;white-space:nowrap;letter-spacing:-0.2px;text-shadow:0.7px 0.5px 0 #333"><span style="position:absolute;left:-10px;right:-10px;top:4.09px;text-align:center;line-height:1">0.00</span></div>
<div class="r" style="left:1220.50px;top:510.30px;width:17.10px;height:9.50px;background:rgba(58,123,224,0.85);border:2px solid #3a7be0;box-sizing:border-box"></div>
<div class="r" style="left:1221.50px;top:506.30px;width:15.10px;height:17.50px;overflow:hidden;font-size:9px;color:#ffffff;white-space:nowrap;letter-spacing:-0.2px;text-shadow:0.7px 0.5px 0 #333"><span style="position:absolute;left:-10px;right:-10px;top:4.09px;text-align:center;line-height:1">0.10</span></div>
<div class="r" style="left:1285.70px;top:510.30px;width:21.40px;height:9.50px;background:rgba(58,123,224,0.85);border:2px solid #3a7be0;box-sizing:border-box"></div>
<div class="r" style="left:1286.70px;top:506.30px;width:19.40px;height:17.50px;overflow:hidden;font-size:9px;color:#ffffff;white-space:nowrap;letter-spacing:-0.2px;text-shadow:0.7px 0.5px 0 #333"><span style="position:absolute;left:-10px;right:-10px;top:4.09px;text-align:center;line-height:1">0.00</span></div>
<div class="r" style="left:1355.00px;top:510.30px;width:18.70px;height:9.50px;background:rgba(58,123,224,0.85);border:2px solid #3a7be0;box-sizing:border-box"></div>
<div class="r" style="left:1356.00px;top:506.30px;width:16.70px;height:17.50px;overflow:hidden;font-size:9px;color:#ffffff;white-space:nowrap;letter-spacing:-0.2px;text-shadow:0.7px 0.5px 0 #333"><span style="position:absolute;left:-10px;right:-10px;top:4.09px;text-align:center;line-height:1">0.00</span></div>
<div class="r" style="left:1085.50px;top:529.20px;width:20.30px;height:10.60px;background:rgba(58,123,224,0.85);border:2px solid #3a7be0;box-sizing:border-box"></div>
<div class="r" style="left:1086.50px;top:525.20px;width:18.30px;height:18.60px;overflow:hidden;font-size:9px;color:#ffffff;white-space:nowrap;letter-spacing:-0.2px;text-shadow:0.7px 0.5px 0 #333"><span style="position:absolute;left:-10px;right:-10px;top:5.19px;text-align:center;line-height:1">0.00</span></div>
<div class="r" style="left:1153.30px;top:529.20px;width:19.10px;height:10.60px;background:rgba(58,123,224,0.85);border:2px solid #3a7be0;box-sizing:border-box"></div>
<div class="r" style="left:1154.30px;top:525.20px;width:17.10px;height:18.60px;overflow:hidden;font-size:9px;color:#ffffff;white-space:nowrap;letter-spacing:-0.2px;text-shadow:0.7px 0.5px 0 #333"><span style="position:absolute;left:-10px;right:-10px;top:5.19px;text-align:center;line-height:1">0.00</span></div>
<div class="r" style="left:1219.50px;top:529.20px;width:20.10px;height:10.60px;background:rgba(58,123,224,0.85);border:2px solid #3a7be0;box-sizing:border-box"></div>
<div class="r" style="left:1220.50px;top:525.20px;width:18.10px;height:18.60px;overflow:hidden;font-size:9px;color:#ffffff;white-space:nowrap;letter-spacing:-0.2px;text-shadow:0.7px 0.5px 0 #333"><span style="position:absolute;left:-10px;right:-10px;top:5.19px;text-align:center;line-height:1">0.00</span></div>
<div class="r" style="left:1285.70px;top:529.20px;width:21.30px;height:10.60px;background:rgba(58,123,224,0.85);border:2px solid #3a7be0;box-sizing:border-box"></div>
<div class="r" style="left:1286.70px;top:525.20px;width:19.30px;height:18.60px;overflow:hidden;font-size:9px;color:#ffffff;white-space:nowrap;letter-spacing:-0.2px;text-shadow:0.7px 0.5px 0 #333"><span style="position:absolute;left:-10px;right:-10px;top:5.19px;text-align:center;line-height:1">0.00</span></div>
<div class="r" style="left:1354.00px;top:529.20px;width:19.70px;height:10.60px;background:rgba(58,123,224,0.85);border:2px solid #3a7be0;box-sizing:border-box"></div>
<div class="r" style="left:1355.00px;top:525.20px;width:17.70px;height:18.60px;overflow:hidden;font-size:9px;color:#ffffff;white-space:nowrap;letter-spacing:-0.2px;text-shadow:0.7px 0.5px 0 #333"><span style="position:absolute;left:-10px;right:-10px;top:5.19px;text-align:center;line-height:1">0.00</span></div>
<div class="r" style="left:977.00px;top:354.30px;width:435.30px;height:197.50px;border:3px solid #3b7bd9;box-sizing:border-box;box-shadow:1.5px 1.5px 3px rgba(0,0,0,0.45), inset 1px 1px 3px rgba(0,0,0,0.25)"></div>
<div class="t" style="left:848.80px;top:552.03px;font-size:8px;color:#707070;font-weight:400;font-style:normal;letter-spacing:0.17px">*Group total, below the limit of detection = 0</div>
<div class="t" style="left:848.40px;top:575.89px;font-size:10.3px;color:#333;font-weight:400;font-style:normal;">Annual Changes in Water Contaminant Burden &amp; Emissions<sup style="font-size:6px;vertical-align:4px">*1</sup></div>
<div class="t" style="left:1300px;top:580px;width:98.5px;text-align:right;font-size:7.4px;line-height:8px;color:#666">Unit: tons/year</div>
</body></html>
